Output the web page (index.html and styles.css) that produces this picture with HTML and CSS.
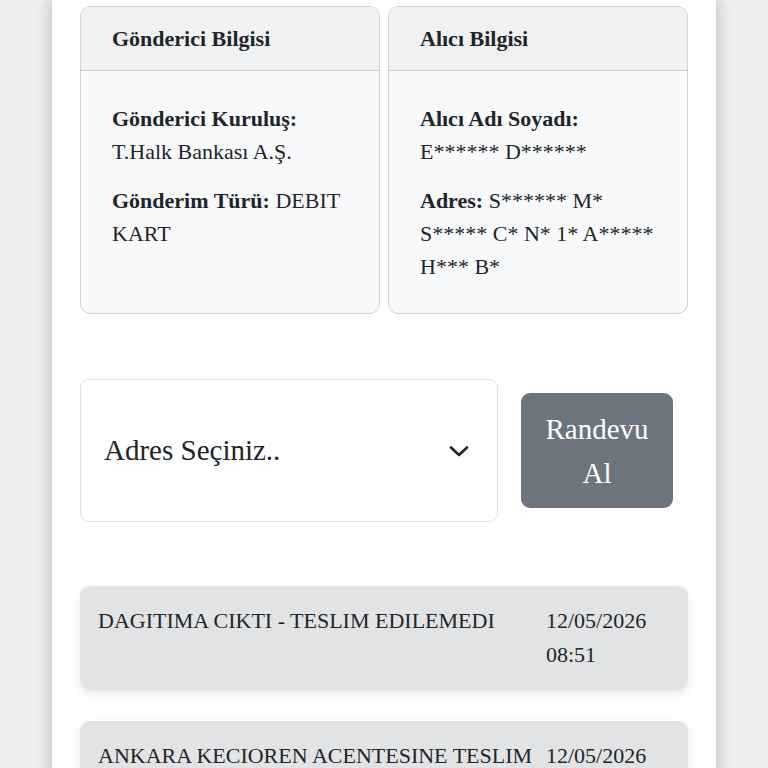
FILE: index.html
```html
<!DOCTYPE html>
<html lang="tr">
<head>
    <meta charset="UTF-8">
    <meta name="viewport" content="width=device-width, initial-scale=1.0">
    <title>Gönderi Takip</title>
    <link rel="stylesheet" href="styles.css">
</head>
<body>
    <div class="page">
        <div class="info-row">
            <div class="info-card">
                <div class="info-header">Gönderici Bilgisi</div>
                <div class="info-body">
                    <p><b>Gönderici Kuruluş:</b><br>T.Halk Bankası A.Ş.</p>
                    <p><b>Gönderim Türü:</b> DEBIT KART</p>
                </div>
            </div>
            <div class="info-card">
                <div class="info-header">Alıcı Bilgisi</div>
                <div class="info-body">
                    <p><b>Alıcı Adı Soyadı:</b><br>E****** D******</p>
                    <p><b>Adres:</b> S****** M* S***** C* N* 1* A***** H*** B*</p>
                </div>
            </div>
        </div>

        <div class="appointment">
            <div class="address-select">
                <span>Adres Seçiniz..</span>
                <svg class="chevron" width="22" height="16" viewBox="0 0 22 16">
                    <path d="M3 4.5 L11 12 L19 4.5" fill="none" stroke="#212529" stroke-width="2.6" stroke-linecap="round" stroke-linejoin="round"/>
                </svg>
            </div>
            <button class="btn-appointment">Randevu Al</button>
        </div>

        <div class="history">
            <div class="history-item">
                <div class="status">DAGITIMA CIKTI - TESLIM EDILEMEDI</div>
                <div class="date">12/05/2026 08:51</div>
            </div>
            <div class="history-item">
                <div class="status">ANKARA KECIOREN ACENTESINE TESLIM EDILDI</div>
                <div class="date">12/05/2026 07:42</div>
            </div>
        </div>
    </div>
</body>
</html>
```

FILE: styles.css
```css
body {
    margin: 0;
    background-color: #eeeeee;
    font-family: "Liberation Serif", "DejaVu Serif", serif;
    color: #212529;
}
.page {
    width: 608px;
    margin: 0 auto;
    padding: 6px 28px 40px;
    background-color: #fff;
    box-shadow: 0 0 16px rgba(0, 0, 0, 0.22);
    min-height: 100vh;
}
.info-row {
    display: flex;
    gap: 8px;
}
.info-card {
    flex: 1;
    border: 1px solid #d3d4d5;
    border-radius: 10px;
    background-color: #f8f9fa;
    overflow: hidden;
}
.info-header {
    background-color: #f0f1f2;
    border-bottom: 1px solid #cfd0d1;
    padding: 15px 31px;
    font-size: 22px;
    line-height: 33px;
    font-weight: bold;
}
.info-body {
    padding: 15px 31px 14px;
    font-size: 22px;
    line-height: 33px;
}
.info-body p {
    margin: 16px 0;
}
.appointment {
    display: flex;
    align-items: center;
    margin-top: 65px;
}
.address-select {
    width: 418px;
    height: 143px;
    box-sizing: border-box;
    border: 1px solid #dee2e6;
    border-radius: 9px;
    padding: 0 27px 0 23px;
    display: flex;
    align-items: center;
    justify-content: space-between;
    font-size: 29px;
}
.btn-appointment {
    margin-left: 23px;
    width: 152px;
    height: 115px;
    border: none;
    border-radius: 9px;
    background-color: #6c757d;
    color: #fff;
    font-family: inherit;
    font-size: 29px;
    line-height: 44px;
    padding: 0 20px;
}
.history {
    margin-top: 64px;
    display: flex;
    flex-direction: column;
    gap: 31px;
}
.history-item {
    display: grid;
    grid-template-columns: 1fr 124px;
    column-gap: 8px;
    padding: 18px 18px;
    background-color: #e2e3e5;
    border-radius: 10px;
    box-shadow: 0 3px 8px rgba(0, 0, 0, 0.1);
    font-size: 22px;
    line-height: 34px;
}
```
